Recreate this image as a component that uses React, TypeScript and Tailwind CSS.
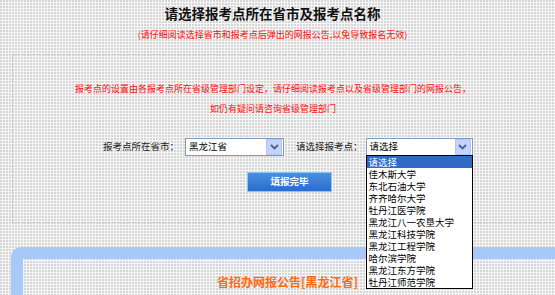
import React from "react";

const items = [
  "请选择",
  "佳木斯大学",
  "东北石油大学",
  "齐齐哈尔大学",
  "牡丹江医学院",
  "黑龙江八一农垦大学",
  "黑龙江科技学院",
  "黑龙江工程学院",
  "哈尔滨学院",
  "黑龙江东方学院",
  "牡丹江师范学院",
];

function Arrow() {
  return (
    <div className="w-[16px] h-[16px] bg-[#c3d3fd] border border-[#b2c6f4] flex items-center justify-center">
      <svg width="9" height="6" viewBox="0 0 9 6">
        <path d="M1 1 L4.5 4.5 L8 1" stroke="#4d6185" strokeWidth="1.8" fill="none" />
      </svg>
    </div>
  );
}

function Select({ value, width }: { value: string; width: string }) {
  return (
    <div className={`${width} h-[18px] bg-white border border-[#7f9db9] flex items-center justify-between pl-[3px] pr-[1px]`}>
      <span className="text-[9.5px] leading-none text-black">{value}</span>
      <Arrow />
    </div>
  );
}

export default function App() {
  return (
    <div
      className="w-[555px] h-[295px] overflow-hidden relative bg-[#f6f6f6] bg-[radial-gradient(circle_at_1px_1px,#c4c4c4_0.6px,transparent_0.9px)] bg-[length:3px_3px]"
      style={{ fontFamily: '"Noto Sans CJK SC", "Noto Sans", sans-serif' }}
    >
      <div className="w-[545px] pt-[5px] flex flex-col items-center">
        <div className="text-[13.5px] leading-[16px] font-bold text-[#111]">
          请选择报考点所在省市及报考点名称
        </div>
        <div className="mt-[8px] text-[9px] leading-[12px] text-[#ff1010]">
          (请仔细阅读选择省市和报考点后弹出的网报公告,以免导致报名无效)
        </div>
      </div>

      <div className="mt-[13px] ml-[12px] w-[570px] h-[169px] border border-dashed border-[#c4c4c4]">
        <div className="w-[520px] pt-[28px] flex flex-col items-center text-[9px] leading-[12px] text-[#ff1010]">
          <div>报考点的设置由各报考点所在省级管理部门设定，请仔细阅读报考点以及省级管理部门的网报公告，</div>
          <div className="mt-[8px]">如仍有疑问请咨询省级管理部门</div>
        </div>

        <div className="mt-[23px] pl-[90px] flex items-center">
          <span className="text-[9.5px] leading-none text-[#222]">报考点所在省市：</span>
          <div className="ml-[6px]">
            <Select value="黑龙江省" width="w-[99px]" />
          </div>
          <span className="ml-[12px] text-[9.5px] leading-none text-[#222]">请选择报考点：</span>
          <div className="ml-[3px] relative">
            <Select value="请选择" width="w-[107px]" />
            <div className="absolute left-0 top-[17px] w-[107px] bg-white border border-black z-10">
              {items.map((it, i) => (
                <div
                  key={it}
                  className={`h-[12px] pl-[2px] text-[9.5px] leading-[12px] ${i === 0 ? "bg-[#316ac5] text-white" : "text-black"}`}
                >
                  {it}
                </div>
              ))}
            </div>
          </div>
        </div>

        <div className="mt-[16px] ml-[234px] w-[85px] h-[20px] bg-gradient-to-b from-[#4a8fe0] to-[#2a6cd0] border border-[#8cc4f4] flex items-center justify-center">
          <span className="text-[9.5px] leading-none font-bold text-white">填报完毕</span>
        </div>
      </div>

      <div className="mt-[24px] ml-[11px] w-[570px] h-[80px] border-[12px] border-[#a6c9f8] rounded-[10px]">
        <div className="pl-[194px] pt-[16px] text-[12px] leading-[14px] font-bold text-[#ff6a10]">
          省招办网报公告[黑龙江省]
        </div>
      </div>
    </div>
  );
}
